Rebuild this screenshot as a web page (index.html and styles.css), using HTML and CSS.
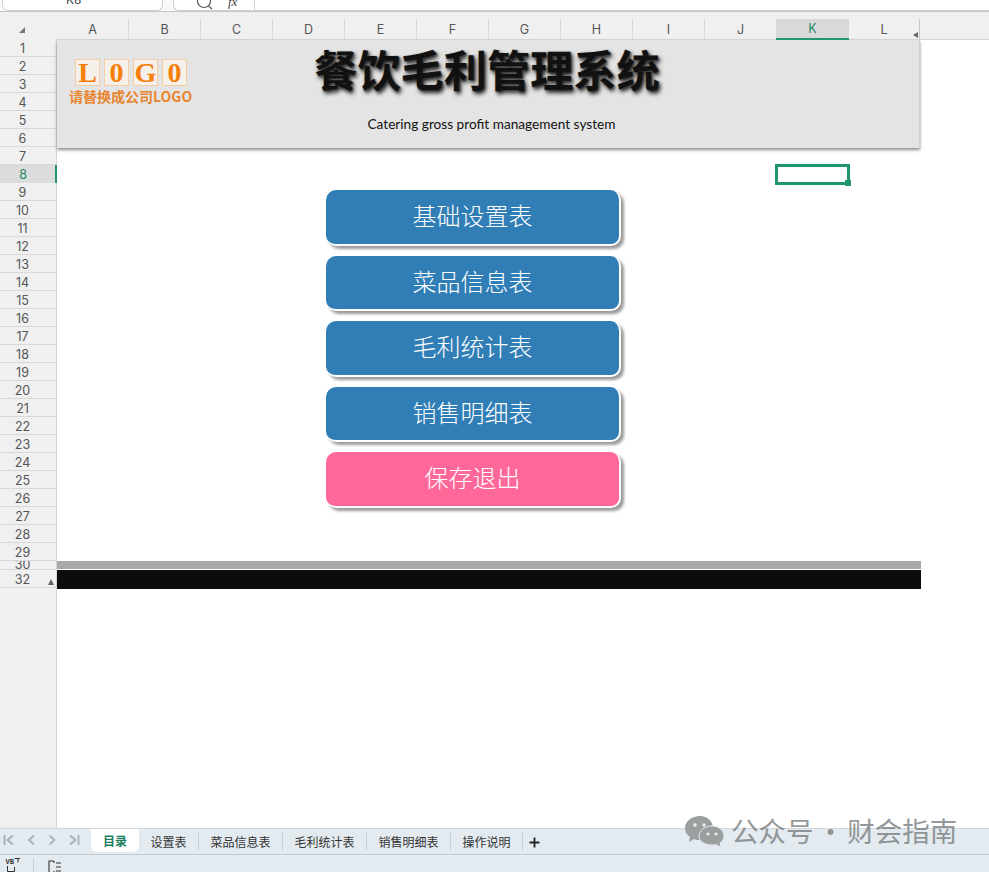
FILE: index.html
```html
<!DOCTYPE html>
<html lang="zh-CN">
<head>
<meta charset="utf-8">
<title>餐饮毛利管理系统</title>
<link rel="stylesheet" href="styles.css">
</head>
<body>
<div class="app">
  <div class="toolbar">
    <div class="name-box"><span class="name-text">K8</span></div>
    <div class="formula-box">
      <svg class="search-icon" width="18" height="18" viewBox="0 0 18 18"><circle cx="8" cy="3" r="6.5" fill="none" stroke="#555" stroke-width="1.2"/><path d="M12.5 8 16 11" stroke="#555" stroke-width="1.2"/></svg>
      <span class="fx"><i>fx</i></span>
      <span class="fx-divider"></span>
    </div>
  </div>
  <div class="col-head">
    <div class="corner"><svg width="8" height="8" viewBox="0 0 8 8"><path d="M7 1V7H1Z" fill="#777"/></svg></div>
    <div class="col">A</div><div class="col">B</div><div class="col">C</div><div class="col">D</div><div class="col">E</div><div class="col">F</div><div class="col">G</div><div class="col">H</div><div class="col">I</div><div class="col col-j">J</div><div class="col col-k">K</div><div class="col col-l">L<svg class="col-arrow" width="6" height="6" viewBox="0 0 6 6"><path d="M5 0V6L0 3Z" fill="#666"/></svg></div>
  </div>
  <div class="body">
    <div class="rows">
      <div class="row">1</div><div class="row">2</div><div class="row">3</div><div class="row">4</div><div class="row">5</div><div class="row">6</div><div class="row">7</div><div class="row row-active">8</div><div class="row">9</div><div class="row">10</div><div class="row">11</div><div class="row">12</div><div class="row">13</div><div class="row">14</div><div class="row">15</div><div class="row">16</div><div class="row">17</div><div class="row">18</div><div class="row">19</div><div class="row">20</div><div class="row">21</div><div class="row">22</div><div class="row">23</div><div class="row">24</div><div class="row">25</div><div class="row">26</div><div class="row">27</div><div class="row">28</div><div class="row">29</div>
      <div class="row row-thin"><span>30</span></div>
      <div class="row row-last">32<svg class="row-arrow" width="6" height="6" viewBox="0 0 6 6"><path d="M3 0 6 6H0Z" fill="#666"/></svg></div>
    </div>
    <div class="sheet">
      <div class="banner">
        <div class="logo">
          <div class="logo-letters"><span class="letter">L</span><span class="letter">0</span><span class="letter">G</span><span class="letter">0</span></div>
          <div class="logo-note">请替换成公司LOGO</div>
        </div>
        <div class="heading">
          <h1 class="title">餐饮毛利管理系统</h1>
          <p class="subtitle">Catering gross profit management system</p>
        </div>
      </div>
      <div class="menu">
        <div class="btn">基础设置表</div>
        <div class="btn">菜品信息表</div>
        <div class="btn">毛利统计表</div>
        <div class="btn">销售明细表</div>
        <div class="btn btn-pink">保存退出</div>
      </div>
      <div class="rule-grey"></div>
      <div class="rule-black"></div>
      <div class="selection"><span class="handle"></span></div>
    </div>
  </div>
  <div class="tabs">
    <div class="nav">
      <svg width="14" height="14" viewBox="0 0 14 14"><path d="M2.500 2V12M11 2.500 5.500 7 11 11.500" fill="none" stroke="#a9b0b5" stroke-width="1.800"/></svg>
      <svg width="14" height="14" viewBox="0 0 14 14"><path d="M10 2.500 5 7 10 11.500" fill="none" stroke="#a9b0b5" stroke-width="1.800"/></svg>
      <svg width="14" height="14" viewBox="0 0 14 14"><path d="M4.500 2.500 9.500 7 4.500 11.500" fill="none" stroke="#a9b0b5" stroke-width="1.800"/></svg>
      <svg width="14" height="14" viewBox="0 0 14 14"><path d="M11.500 2V12M3 2.500 8.500 7 3 11.500" fill="none" stroke="#a9b0b5" stroke-width="1.800"/></svg>
    </div>
    <div class="tab tab-active">目录</div>
    <div class="tab tab-s">设置表</div>
    <div class="tab tab-m">菜品信息表</div>
    <div class="tab tab-m">毛利统计表</div>
    <div class="tab tab-m">销售明细表</div>
    <div class="tab tab-n">操作说明</div>
    <svg class="plus" width="11" height="11" viewBox="0 0 11 11"><path d="M5.500 0.500V10.500M0.500 5.500H10.500" stroke="#222" stroke-width="1.800"/></svg>
  </div>
  <div class="status">
    <svg class="vba" width="16" height="16" viewBox="0 0 16 16"><text x="0.500" y="7" font-family="Liberation Mono" font-size="7" font-weight="700" fill="#333">VB</text><path d="M9.500 1.500H15M13 1.500V5.500M2.500 9V14.500H9.500V10" fill="none" stroke="#333" stroke-width="1"/></svg>
    <span class="status-div"></span>
    <svg class="layout" width="14" height="14" viewBox="0 0 14 14"><path d="M6 1H1V13H6M6 1V3M6 11V13M8 3H13M8 7H13M8 11H13" fill="none" stroke="#333" stroke-width="1.100"/></svg>
  </div>
  <div class="watermark">
    <svg class="wechat" width="39" height="32" viewBox="0 0 39 32"><path d="M15 0C7 0 0 5 0 12C0 16 2 19 5 21L4 26L9 23C11 24 13 24 15 24C22 24 28 19 28 12C28 5 22 0 15 0Z" fill="#9aa0a0"/><path d="M27 10C20 10 14 14.500 14 20C14 25.500 20 29 27 29C28.500 29 30 29 31 28.500L36 31.500L35 27C37.500 25 39 23 39 20C39 14.500 34 10 27 10Z" fill="#9aa0a0" stroke="#e3eaf0" stroke-width="1"/><circle cx="10" cy="9" r="1.700" fill="#eef0f0"/><circle cx="19" cy="9" r="1.700" fill="#eef0f0"/><circle cx="23" cy="18" r="1.500" fill="#eef0f0"/><circle cx="31" cy="18" r="1.500" fill="#eef0f0"/></svg>
    <span class="wm-text">公众号 · 财会指南</span>
  </div>
</div>
</body>
</html>
```
FILE: styles.css
```css
* { box-sizing: border-box; }
html, body { margin: 0; padding: 0; }
body { font-family: "Inter", "Noto Sans CJK SC", sans-serif; background: #fff; }
.app { position: relative; width: 989px; height: 872px; overflow: hidden; display: flex; flex-direction: column; }

.toolbar { flex: none; height: 12px; display: flex; gap: 10px; padding-left: 2px; background: #fafafa; border-bottom: 1px solid #c6c6c6; }
.name-box { width: 161px; height: 11px; background: #fff; border: 1px solid #d0d0d0; border-top: 0; border-radius: 0 0 6px 6px; overflow: hidden; position: relative; }
.name-text { position: absolute; left: 63px; top: -7px; font-size: 12px; line-height: 14px; color: #444; }
.formula-box { flex: 1; height: 11px; background: #fff; border: 1px solid #d0d0d0; border-top: 0; border-right: 0; border-radius: 0 0 0 6px; display: flex; overflow: hidden; padding-left: 22px; }
.search-icon { flex: none; margin-top: -2px; }
.fx { margin-left: 14px; font-size: 13px; line-height: 10px; margin-top: -3px; color: #444; font-family: "Liberation Serif", serif; }
.fx-divider { width: 1px; height: 11px; background: #d0d0d0; margin-left: 17px; }

.col-head { flex: none; height: 28px; display: flex; align-items: flex-end; background: #f0f0f0; border-bottom: 1px solid #d6d6d6; }
.corner { width: 57px; height: 27px; display: flex; justify-content: center; align-items: flex-end; padding: 0 14px 5px 0; }
.col { position: relative; width: 72px; height: 20px; flex: none; display: flex; align-items: center; justify-content: center; font-size: 12.5px; color: #555; border-right: 1px solid #d8d8d8; }
.col-j { width: 71px; border-right: 0; }
.col-k { width: 73px; background: #d9d9d9; color: #1f8a68; border-right: 0; border-bottom: 2px solid #1f9670; height: 21px; margin-bottom: -1px; }
.col-l { width: 71px; height: 20px; border-right: 1px solid #c8c8c8; }
.col-arrow { position: absolute; right: 0; bottom: 1px; }

.body { flex: 1; display: flex; min-height: 0; }
.rows { flex: none; width: 57px; background: #f0f0f0; border-right: 1px solid #d6d6d6; margin-top: -1px; }
.row { height: 18px; display: flex; align-items: center; justify-content: center; padding-right: 11px; padding-top: 1px; font-size: 12.5px; color: #555; border-bottom: 1px solid #d8d8d8; }
.row-active { background: #dcdcdc; color: #1f8a68; border-right: 2px solid #1f9670; border-bottom: 0; padding-right: 9px; margin-right: -1px; }
.row-thin { height: 9px; overflow: hidden; align-items: flex-start; padding-top: 0; }
.row-thin span { margin-top: -3px; line-height: 14px; }
.row-last { position: relative; }
.row-arrow { position: absolute; right: 2px; bottom: 2px; }

.sheet { position: relative; flex: 1; }
.banner { width: 863px; height: 108px; background: #e4e4e4; box-shadow: 0 2px 3px #8e8e8e; display: flex; border-right: 1px solid #cfcfcf; }
.logo { margin: 19px 0 0 12px; width: 124px; flex: none; }
.logo-letters { display: flex; gap: 4px; padding-left: 6px; }
.letter { width: 25px; height: 27px; background: #f5f0ea; border: 1px solid #f4cda3; color: #f57f0a; font: 700 28px/26px "Liberation Serif", serif; text-align: center; }
.logo-note { margin-top: 1px; font: 700 14px/18px "Noto Sans CJK SC", sans-serif; color: #e8852e; white-space: nowrap; }
.heading { margin-left: 97px; width: 394px; flex: none; text-align: center; }
.title { margin: 0; font: 700 43.200px/57px "Noto Sans CJK SC", sans-serif; color: #111; text-shadow: 2px 3px 4px #222, 1px 1px 2px #555; white-space: nowrap; }
.subtitle { margin: 18px 0 0 9px; font: 400 13.650px/18px "Lato", sans-serif; color: #111; white-space: nowrap; }

.menu { margin: 42px 0 0 269px; width: 295px; display: flex; flex-direction: column; gap: 10px; }
.btn { height: 55.500px; background: #317eb6; border-radius: 10px; border-right: 2px solid #fff; border-bottom: 2px solid #fff; box-shadow: 3px 3px 3px #9a9a9a; color: #fff; font: 300 24px/50px "Noto Sans CJK SC", sans-serif; text-align: center; }
.btn-pink { background: #ff6898; }

.rule-grey { margin-top: 53.500px; width: 864px; height: 8px; background: #a8a8a8; }
.rule-black { margin-top: 1px; width: 864px; height: 19px; background: #0c0c0c; }

.selection { position: absolute; left: 718px; top: 124px; width: 75px; height: 21px; border: 3px solid #1f9670; }
.handle { position: absolute; right: -4px; bottom: -4px; width: 6px; height: 6px; background: #1f9670; }

.tabs { flex: none; height: 27px; display: flex; align-items: flex-start; background: #e3eaf0; border-top: 1px solid #d0d8dd; border-bottom: 1px solid #c4cbd0; position: relative; }
.nav { width: 91px; flex: none; display: flex; gap: 7.500px; padding: 4px 0 0 2px; }
.tab { flex: none; height: 17px; margin-top: 4px; font: 400 12px/17px "Noto Sans CJK SC", sans-serif; color: #333; text-align: center; border-right: 1px solid #c8cfd4; }
.tab-active { width: 48px; height: 23px; margin-top: 0; line-height: 23px; background: #fff; color: #1b7f5f; font-weight: 700; border-right: 0; border-radius: 0 0 6px 6px; }
.tab-s { width: 60px; }
.tab-m { width: 84px; }
.tab-n { width: 72px; }
.plus { margin: 8px 0 0 6px; flex: none; }

.status { flex: none; height: 17px; display: flex; align-items: flex-start; background: #e3eaf0; padding-left: 5px; }
.vba { margin-top: 2px; }
.status-div { width: 1px; height: 14px; background: #c8cfd4; margin: 3px 0 0 12px; }
.layout { margin: 5px 0 0 14px; }

.watermark { position: absolute; left: 685px; top: 816px; display: flex; align-items: flex-start; gap: 7px; }
.wm-text { font: 400 27.500px/32px "Noto Sans CJK SC", sans-serif; margin-top: -2px; word-spacing: -3px; color: rgba(120, 125, 125, 0.8); white-space: nowrap; }
```
